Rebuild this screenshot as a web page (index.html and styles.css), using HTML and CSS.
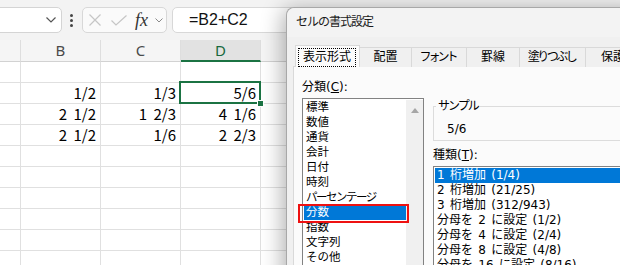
FILE: index.html
```html
<!DOCTYPE html>
<html lang="ja">
<head>
<meta charset="utf-8">
<title>セルの書式設定</title>
<link rel="stylesheet" href="styles.css">
</head>
<body>
<div class="app">
  <div class="fbar">
    <div class="namebox">
      <svg class="nb-chev" width="10" height="6" viewBox="0 0 10 6"><polyline points="0.5,0.5 5,5 9.5,0.5" fill="none" stroke="#555" stroke-width="1.2"/></svg>
    </div>
    <div class="kebab"><i></i><i></i><i></i></div>
    <div class="fnbox">
      <svg class="ic-x" width="12" height="12" viewBox="0 0 12 12"><path d="M0.5 0.5 L11.5 11.5 M11.5 0.5 L0.5 11.5" stroke="#c6c6c6" stroke-width="1.2" fill="none"/></svg>
      <svg class="ic-ok" width="16" height="11" viewBox="0 0 16 11"><polyline points="0.5,5.5 5,10 15.5,0.5" fill="none" stroke="#c6c6c6" stroke-width="1.2"/></svg>
      <span class="fx">fx</span>
      <svg class="ic-chev" width="8" height="5" viewBox="0 0 8 5"><polyline points="0.5,0.5 4,4 7.5,0.5" fill="none" stroke="#8a8a8a" stroke-width="1"/></svg>
    </div>
    <div class="formula">=B2+C2</div>
  </div>

  <div class="sheet">
    <div class="hd"></div><div class="hd">B</div><div class="hd">C</div><div class="hd sel">D</div><div class="hd"></div><div class="hd"></div>
    <div class="c"></div><div class="c"></div><div class="c"></div><div class="c"></div><div class="c"></div><div class="c"></div>
    <div class="c"></div><div class="c">1/2</div><div class="c">1/3</div><div class="c active">5/6</div><div class="c"></div><div class="c"></div>
    <div class="c"></div><div class="c">2 1/2</div><div class="c">1 2/3</div><div class="c">4 1/6</div><div class="c"></div><div class="c"></div>
    <div class="c"></div><div class="c">2 1/2</div><div class="c">1/6</div><div class="c">2 2/3</div><div class="c"></div><div class="c"></div>
    <div class="c"></div><div class="c"></div><div class="c"></div><div class="c"></div><div class="c"></div><div class="c"></div>
    <div class="c"></div><div class="c"></div><div class="c"></div><div class="c"></div><div class="c"></div><div class="c"></div>
    <div class="c"></div><div class="c"></div><div class="c"></div><div class="c"></div><div class="c"></div><div class="c"></div>
    <div class="c"></div><div class="c"></div><div class="c"></div><div class="c"></div><div class="c"></div><div class="c"></div>
    <div class="c"></div><div class="c"></div><div class="c"></div><div class="c"></div><div class="c"></div><div class="c"></div>
    <div class="c"></div><div class="c"></div><div class="c"></div><div class="c"></div><div class="c"></div><div class="c"></div>
  </div>

  <div class="dialog">
    <div class="title">セルの書式設定</div>
    <div class="tabs">
      <div class="tab on"><span class="focus">表示形式</span></div>
      <div class="tab t-align">配置</div>
      <div class="tab t-font">フォント</div>
      <div class="tab t-border">罫線</div>
      <div class="tab t-fill">塗りつぶし</div>
      <div class="tab t-prot">保護</div>
    </div>
    <div class="panel">
      <div class="col-left">
        <div class="lbl">分類(<u>C</u>):</div>
        <div class="listbox lb1">
          <div class="items">
            <div class="item">標準</div>
            <div class="item">数値</div>
            <div class="item">通貨</div>
            <div class="item">会計</div>
            <div class="item">日付</div>
            <div class="item">時刻</div>
            <div class="item kana">パーセンテージ</div>
            <div class="item selected marked">分数</div>
            <div class="item">指数</div>
            <div class="item">文字列</div>
            <div class="item">その他</div>
          </div>
          <div class="vscroll">
            <svg width="8" height="5" viewBox="0 0 8 5"><polygon points="0,5 4,0 8,5" fill="#a6a6a6"/></svg>
          </div>
        </div>
      </div>
      <div class="col-right">
        <fieldset class="sample">
          <legend>サンプル</legend>
          <div class="sample-val">5/6</div>
        </fieldset>
        <div class="lbl kind">種類(<u>T</u>):</div>
        <div class="listbox lb2">
          <div class="items">
            <div class="item selected">1 桁増加 (1/4)</div>
            <div class="item">2 桁増加 (21/25)</div>
            <div class="item">3 桁増加 (312/943)</div>
            <div class="item">分母を 2 に設定 (1/2)</div>
            <div class="item">分母を 4 に設定 (2/4)</div>
            <div class="item">分母を 8 に設定 (4/8)</div>
            <div class="item">分母を 16 に設定 (8/16)</div>
          </div>
        </div>
      </div>
    </div>
  </div>
</div>
</body>
</html>
```

FILE: styles.css
```css
* { box-sizing: border-box; }

html, body {
  margin: 0;
  padding: 0;
  width: 620px;
  height: 265px;
  overflow: hidden;
  background: #ffffff;
}

.app {
  position: relative;
  width: 620px;
  height: 265px;
  overflow: hidden;
  font-family: "Noto Sans CJK JP", "Noto Sans", sans-serif;
  color: #000;
}

/* ---------- formula bar ---------- */
.fbar {
  height: 40px;
  background: #f3f3f3;
  display: flex;
  align-items: center;
}

.namebox {
  width: 72px;
  height: 26px;
  margin-left: -10px;
  background: #fff;
  border: 1px solid #d4d4d4;
  border-radius: 5px;
  display: flex;
  align-items: center;
  justify-content: flex-end;
  padding-right: 5px;
}

.kebab {
  width: 3px;
  margin-left: 8px;
  display: flex;
  flex-direction: column;
  gap: 2px;
}
.kebab i {
  display: block;
  width: 3px;
  height: 3px;
  border-radius: 50%;
  background: #444;
}

.fnbox {
  margin-left: 9px;
  width: 85px;
  height: 26px;
  background: #fafafa;
  border: 1px solid #d8d8d8;
  border-radius: 5px;
  display: flex;
  align-items: center;
  padding-left: 6px;
}
.ic-ok { margin-left: 10px; }
.fx {
  margin-left: 8px;
  font-family: "Liberation Serif", serif;
  font-style: italic;
  font-size: 18px;
  color: #333;
  line-height: 1;
}
.ic-chev { margin-left: 7px; }

.formula {
  margin-left: 5px;
  width: 200px;
  height: 26px;
  background: #fff;
  border: 1px solid #d8d8d8;
  border-radius: 5px;
  padding-left: 16px;
  font-family: "Liberation Sans", sans-serif;
  font-size: 16px;
  line-height: 24px;
  color: #111;
}

/* ---------- sheet ---------- */
.sheet {
  display: grid;
  grid-template-columns: 21px 80px 80px 80px 80px 80px;
  grid-template-rows: 22px;
  grid-auto-rows: 21px;
}

.hd {
  background: #f5f5f5;
  border-right: 1px solid #dedede;
  border-bottom: 1px solid #d2d2d2;
  text-align: center;
  font-family: "Noto Sans", sans-serif;
  font-size: 15px;
  line-height: 21px;
  color: #4a4a4a;
}
.hd.sel {
  background: #e2e2e2;
  border-bottom: 2px solid #1b7343;
  color: #17683d;
}

.c {
  border-right: 1px solid #e0e0e0;
  border-bottom: 1px solid #e0e0e0;
  text-align: right;
  padding-right: 4px;
  font-family: "Noto Sans CJK JP", sans-serif;
  font-size: 15px;
  line-height: 20px;
  word-spacing: 3px;
  color: #000;
}

.c.active { position: relative; }
.c.active::before {
  content: "";
  position: absolute;
  left: -2px;
  top: -2px;
  right: -1px;
  bottom: -1px;
  border: 2px solid #1b7343;
}
.c.active::after {
  content: "";
  position: absolute;
  right: -3px;
  bottom: -3px;
  width: 5px;
  height: 5px;
  background: #1b7343;
  border: 1px solid #fff;
  box-sizing: content-box;
  margin: -1px;
}

/* ---------- dialog ---------- */
.dialog {
  position: absolute;
  left: 286px;
  top: 7px;
  width: 360px;
  height: 290px;
  background: #f0f0f0;
  border: 1px solid #a8a8a8;
  border-right: none;
  border-bottom: none;
  border-radius: 8px 0 0 0;
  box-shadow: -3px 2px 22px rgba(0, 0, 0, 0.32);
  font-family: "DejaVu Sans", "Noto Sans CJK JP", sans-serif;
  font-size: 12px;
}

.title {
  height: 29px;
  line-height: 29px;
  padding-left: 9px;
  background: #f3f3f3;
  border-radius: 8px 0 0 0;
  color: #1a1a1a;
  letter-spacing: -1px;
}

.tabs {
  display: flex;
  align-items: flex-end;
  height: 22px;
  margin-top: 8px;
  margin-left: 8px;
}

.tab {
  height: 20px;
  line-height: 18px;
  border: 1px solid #d9d9d9;
  border-bottom: none;
  margin-left: -1px;
  background: #f0f0f0;
  white-space: nowrap;
  text-align: center;
}
.tab.t-align { width: 53px; }
.tab.t-font { width: 56px; letter-spacing: -3px; text-indent: -3px; }
.tab.t-border { width: 54px; }
.tab.t-fill { width: 67px; letter-spacing: -2.5px; text-indent: -2px; }
.tab.t-prot { width: 56px; }
.tab.on {
  height: 22px;
  padding: 2px 3px 0 2px;
  background: #fbfbfb;
  position: relative;
  z-index: 1;
  margin-left: 0;
  text-align: left;
}
.focus {
  display: block;
  border: 1px dotted #000;
  padding: 0 4px;
  line-height: 17px;
}

.panel {
  margin-left: 6px;
  margin-top: -1px;
  height: 220px;
  background: #fbfbfb;
  border: 1px solid #d9d9d9;
  border-right: none;
  display: flex;
  gap: 9px;
  padding: 13px 0 0 8px;
}

.lbl {
  height: 14px;
  line-height: 14px;
}
.lbl u { text-underline-offset: 1px; }

.col-left { width: 122px; flex: none; }
.col-left .lbl { margin-bottom: 4px; }

.listbox {
  background: #fff;
  border: 1px solid #828282;
  padding: 1px;
  height: 200px;
}
.lb1 {
  display: flex;
  padding-right: 0;
}
.lb1 .items { flex: 1; }

.item {
  height: 15px;
  line-height: 15px;
  padding-left: 2px;
  white-space: nowrap;
  overflow: hidden;
}
.lb1 .item { font-size: 11.5px; }
.lb1 .item.kana { letter-spacing: -1.5px; }
.lb2 .item { word-spacing: 1.5px; }
.item.selected {
  background: #0078d7;
  color: #fff;
}
.item.marked { position: relative; overflow: visible; }
.item.marked::after {
  content: "";
  position: absolute;
  left: -6px;
  top: -1px;
  right: -3px;
  bottom: -3px;
  border: 2px solid #ee1111;
}

.vscroll {
  width: 17px;
  background: #f0f0f0;
  display: flex;
  justify-content: center;
  padding-top: 8px;
}

.col-right {
  flex: 1;
  padding-top: 19px;
}

.sample {
  margin: 0;
  border: 1px solid #dcdcdc;
  padding: 0 13px 4px 13px;
  min-width: 0;
}
.sample legend {
  margin-left: -11px;
  padding: 0 2px;
  line-height: 14px;
  letter-spacing: -2px;
}
.sample-val {
  margin-top: 9px;
  line-height: 14px;
}

.lbl.kind { margin-top: 7px; margin-bottom: 4px; }
```
